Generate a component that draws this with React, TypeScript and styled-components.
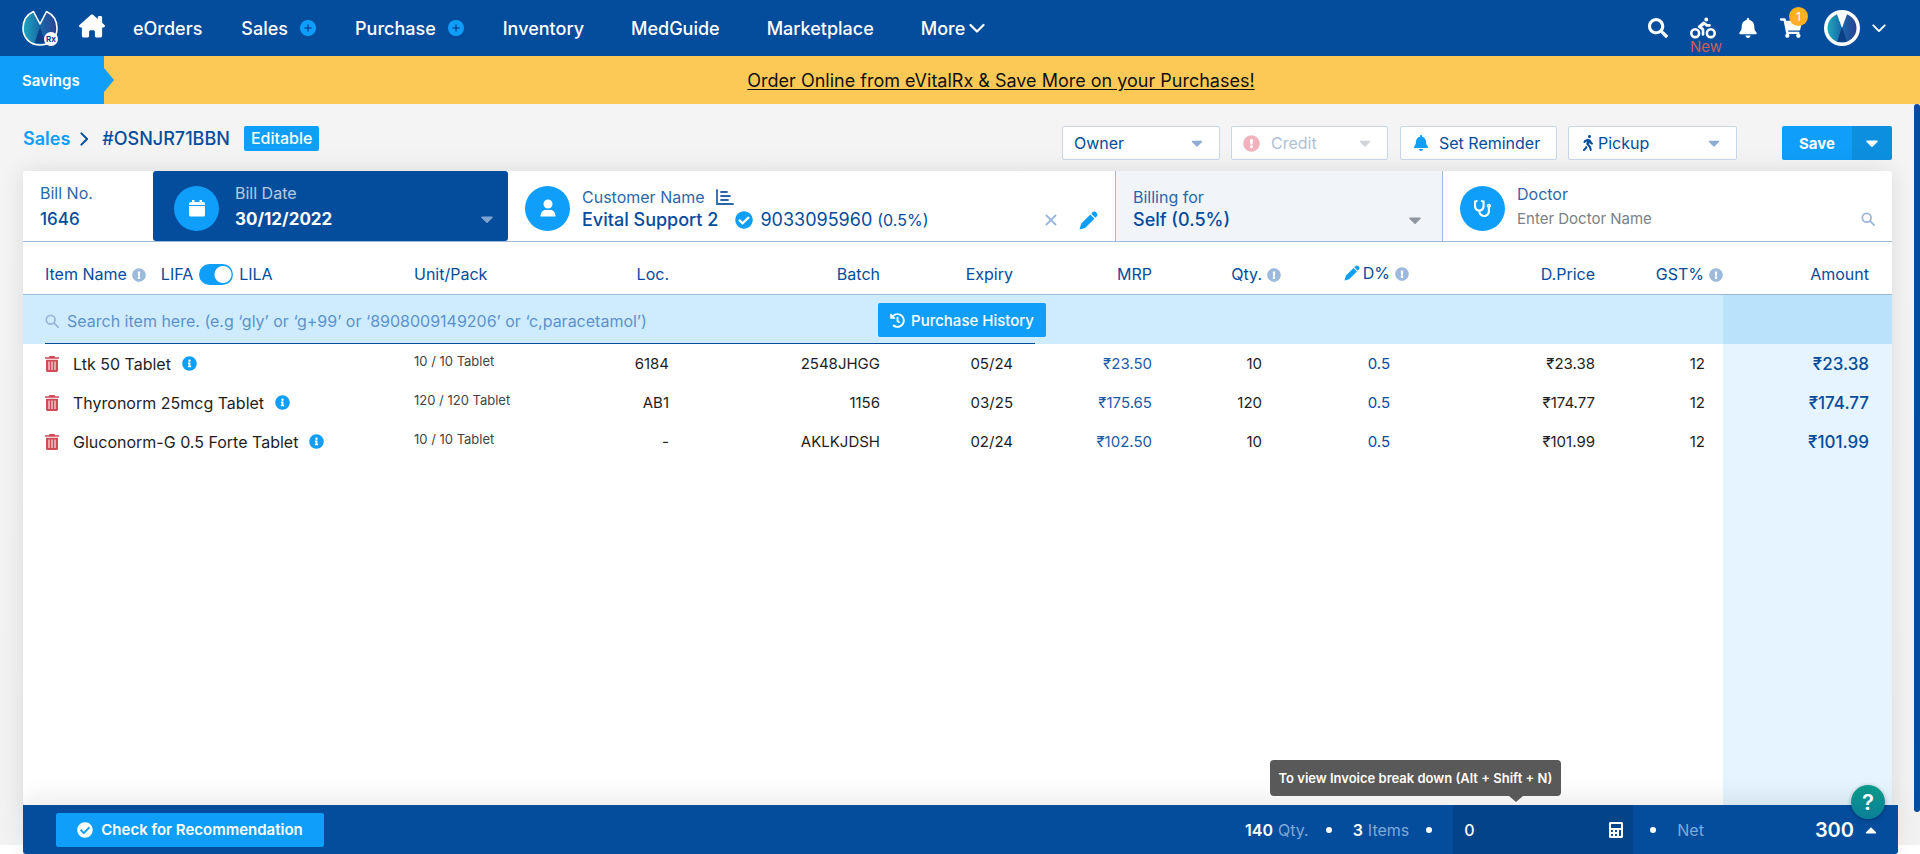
import React from "react";
import styled, { createGlobalStyle, css } from "styled-components";
import {
  FaSearch, FaBell, FaShoppingCart, FaWalking, FaCheckCircle,
  FaExclamationCircle, FaInfoCircle, FaHistory, FaStethoscope, FaCaretDown, FaCaretUp,
  FaCalculator, FaBiking,
} from "react-icons/fa";
import { FaHouseChimney } from "react-icons/fa6";

const NAVY = "#044c9c";
const SKY = "#0f9ef9";
const RULE = "#9db9dc";

const Global = createGlobalStyle`
  *, *::before, *::after { box-sizing: border-box; }
  body { margin: 0; background: #fff; font-family: Inter, "Noto Sans", sans-serif; font-size: 14px; color: ${NAVY}; }
  button, input, select { font: inherit; color: inherit; }
  button { border: 0; padding: 0; background: none; cursor: pointer; }
  a { color: inherit; text-decoration: none; }
  svg { display: block; flex: none; }
`;

const Page = styled.div`
  min-height: 100vh;
  display: flex;
  flex-direction: column;
`;

const Nav = styled.header`
  height: 56px;
  background: ${NAVY};
  color: #fff;
  display: flex;
  align-items: center;
  padding: 0 34px 0 22px;
`;
const Home = styled.a`margin: 0 28px 4px 21px;`;
const Links = styled.nav`
  display: flex;
  align-items: center;
  gap: 39px;
  font-size: 18px;
  font-weight: 500;
`;
const NavLink = styled.a<{ $wide?: boolean }>`
  display: flex;
  align-items: center;
  gap: ${(p) => (p.$wide ? 12 : 4)}px;
`;
const NavPlain = styled(NavLink)`padding-right: 8px;`;
const Tools = styled.div`
  margin-left: auto;
  display: flex;
  align-items: center;
  gap: 22px;
`;
const Tool = styled.button`
  position: relative;
  display: flex;
  align-items: center;
  gap: 12px;
`;
const NewTag = styled.span`
  position: absolute;
  top: 24px;
  left: 0;
  font-size: 15px;
  line-height: 15px;
  color: #cf5d5d;
`;
const CartCount = styled.span`
  position: absolute;
  right: -6px;
  top: -10px;
  width: 19px;
  height: 19px;
  border-radius: 50%;
  background: #fdb022;
  font-size: 12px;
  line-height: 19px;
  text-align: center;
`;

const Banner = styled.div`
  height: 48px;
  display: flex;
  background: #fdc956;
`;
const Savings = styled.div`
  position: relative;
  width: 104px;
  display: flex;
  align-items: center;
  padding-left: 22px;
  background: ${SKY};
  color: #fff;
  font-size: 15px;
  font-weight: 600;
  &::after {
    content: "";
    position: absolute;
    left: 100%;
    top: 12px;
    border: 12px solid transparent;
    border-left: 10px solid ${SKY};
    border-right: 0;
  }
`;
const Offer = styled.a`
  margin: auto;
  padding-right: 22px;
  color: #111;
  font-size: 18px;
  text-decoration: underline;
  text-underline-offset: 2px;
`;

const Body = styled.main`
  position: relative;
  flex: 1;
  display: flex;
  flex-direction: column;
  padding: 22px 22px 0 23px;
  background: linear-gradient(#f4f4f4 0, #f2f2f2 100%) no-repeat 0 0 / 100% calc(100% - 9px);
`;
const ScrollThumb = styled.div`
  position: absolute;
  right: 0;
  top: 0;
  width: 6px;
  bottom: 42px;
  border-radius: 4px;
  background: ${NAVY};
`;

const TitleRow = styled.div`
  display: flex;
  align-items: flex-start;
  padding-right: 6px;
  margin-bottom: 11px;
`;
const Crumbs = styled.div`
  display: flex;
  align-items: center;
  height: 25px;
  font-size: 18px;
  font-weight: 500;
  margin-right: auto;
  a { color: ${SKY}; font-weight: 600; }
  svg { margin: 0 11px 0 7px; }
`;
const Badge = styled.span`
  margin-left: 14px;
  padding: 0 7px;
  border-radius: 2px;
  background: ${SKY};
  color: #fff;
  font-size: 16px;
  line-height: 25px;
`;
const boxed = css`
  height: 34px;
  border: 1px solid #c9d7ea;
  border-radius: 2px;
  background: #fff;
`;
const Picker = styled.div<{ $width: number; $gap?: number; $off?: boolean }>`
  ${boxed}
  width: ${(p) => p.$width}px;
  margin-left: 11px;
  display: flex;
  align-items: center;
  gap: ${(p) => p.$gap ?? 8}px;
  padding: 0 13px 0 11px;
  color: ${(p) => (p.$off ? "#aebfd6" : NAVY)};
  & > svg:last-child { color: ${(p) => (p.$off ? "#cfd3da" : "#8fadd3")}; }
  select {
    appearance: none;
    border: 0;
    padding: 0;
    background: none;
    flex: 1;
    min-width: 0;
    opacity: 1;
    color: inherit;
    font-size: 16px;
  }
`;
const Reminder = styled.button`
  ${boxed}
  width: 157px;
  margin-left: 12px;
  display: flex;
  align-items: center;
  gap: 10px;
  padding-left: 12px;
  font-size: 16px;
  svg { color: ${SKY}; }
`;
const SaveGroup = styled.div`
  display: flex;
  height: 34px;
  margin-left: 45px;
  border-radius: 2px;
  overflow: hidden;
  color: #fff;
`;
const SaveButton = styled.button`
  width: 70px;
  background: ${SKY};
  font-size: 15px;
  font-weight: 700;
`;
const SaveMore = styled.button`
  width: 40px;
  display: grid;
  place-items: center;
  background: #0d8fe0;
`;

const Card = styled.section`
  flex: 1;
  display: flex;
  flex-direction: column;
  margin-right: 6px;
  background: linear-gradient(#e5f4fe, #e5f4fe) no-repeat right 0 top 124px / 169px 100%, #fff;
  border-radius: 2px;
  box-shadow: 0 0 24px rgba(0, 0, 0, 0.1);
`;
const Details = styled.div`
  display: flex;
  height: 71px;
  border-bottom: 1px solid ${RULE};
`;
const Field = styled.div<{ $basis: number; $tone?: "navy" | "pale"; $line?: boolean }>`
  flex: ${(p) => p.$basis} 1 ${(p) => p.$basis}px;
  min-width: 0;
  display: flex;
  align-items: center;
  gap: 12px;
  padding: 0 17px;
  border-left: ${(p) => (p.$line ? `1px solid ${RULE}` : 0)};
  ${(p) => p.$tone === "navy" && css`background: ${NAVY}; color: #fff; border-radius: 3px; padding: 0 11px 0 21px; gap: 16px;`}
  ${(p) => p.$tone === "pale" && css`background: #f1f5fa;`}
`;
const Round = styled.span`
  width: 45px;
  height: 45px;
  flex: none;
  border-radius: 50%;
  background: ${SKY};
  color: #fff;
  display: grid;
  place-items: center;
  margin-top: 4px;
`;
const Stack = styled.div<{ $low?: boolean }>`
  flex: 1;
  min-width: 0;
  display: flex;
  flex-direction: column;
  gap: ${(p) => (p.$low ? 0 : 3)}px;
  padding-top: ${(p) => (p.$low ? 6 : 0)}px;
`;
const Label = styled.label<{ $soft?: boolean }>`
  display: flex;
  align-items: center;
  gap: 11px;
  font-size: 16px;
  line-height: 22px;
  opacity: ${(p) => (p.$soft ? 0.7 : 0.85)};
`;
const Value = styled.div`
  display: flex;
  align-items: center;
  font-size: 18px;
  line-height: 24px;
  font-weight: 500;
`;
const Phone = styled.span`
  display: flex;
  align-items: center;
  gap: 7px;
  margin-left: 17px;
  font-weight: 400;
  svg { color: ${SKY}; }
  small { font-size: 16px; margin-left: -2px; }
`;
const IconPair = styled.div`
  display: flex;
  align-items: center;
  gap: 22px;
  margin-left: auto;
`;
const BareInput = styled.input`
  border: 0;
  padding: 0;
  background: none;
  width: 100%;
  min-width: 0;
  outline: 0;
  font-size: 15px;
  font-weight: 400;
  line-height: 22px;
  &::placeholder { color: #7b7f86; opacity: 1; }
`;
const BillInput = styled(BareInput)<{ $bold?: boolean }>`
  font-size: 17px;
  line-height: 24px;
  font-weight: ${(p) => (p.$bold ? 700 : 500)};
`;
const BillSelect = styled.select`
  appearance: none;
  border: 0;
  padding: 0;
  background: none;
  flex: 1;
  font-size: 18px;
  line-height: 24px;
  font-weight: 500;
`;

const Grid = styled.table`
  width: 100%;
  table-layout: fixed;
  border-collapse: separate;
  border-spacing: 0;
  font-size: 15px;
`;
const Head = styled.th<{ $left?: boolean; $pad?: number }>`
  height: 53px;
  padding: 12px ${(p) => p.$pad ?? 12}px 0 0;
  border-bottom: 1px solid ${RULE};
  background: #fff;
  font-size: 16px;
  font-weight: 400;
  text-align: ${(p) => (p.$left ? "left" : "right")};
  white-space: nowrap;
`;
const HeadInner = styled.span<{ $start?: number }>`
  display: inline-flex;
  align-items: center;
  gap: 5px;
  padding-left: ${(p) => p.$start ?? 0}px;
`;
const Dim = styled.span`color: ${RULE}; padding-top: 2px;`;
const Pen = styled.span`color: ${SKY}; margin-right: -2px;`;
const Mode = styled.label`
  display: flex;
  align-items: center;
  gap: 6px;
  margin-left: 10px;
  input {
    appearance: none;
    margin: 0;
    width: 34px;
    height: 21px;
    border-radius: 11px;
    background: radial-gradient(circle at 24px 50%, #fff 8px, transparent 9px), ${SKY};
  }
`;
const SearchCell = styled.td<{ $deep?: boolean }>`
  height: 49px;
  padding: 0;
  background: ${(p) => (p.$deep ? "#b9e2fb" : "#cfebfe")};
`;
const SearchLine = styled.div`
  display: flex;
  align-items: center;
  gap: 8px;
  height: 49px;
  max-width: 990px;
  margin-left: 22px;
  padding-top: 4px;
  border-bottom: 1px solid ${NAVY};
  color: #8db0d8;
`;
const SearchInput = styled(BareInput)`
  font-size: 16px;
  &::placeholder { color: #5b93cc; }
`;
const HistoryButton = styled.button`
  flex: none;
  display: flex;
  align-items: center;
  justify-content: center;
  gap: 6px;
  width: 168px;
  height: 34px;
  margin: 0 -11px 2px 0;
  border-radius: 2px;
  background: ${SKY};
  color: #fff;
  font-size: 15px;
  font-weight: 500;
`;
const Cell = styled.td<{ $tone?: string; $pad?: number }>`
  height: 39px;
  padding: 0 ${(p) => p.$pad ?? 12}px 0 0;
  text-align: right;
  color: ${(p) => p.$tone ?? "#1e1e1e"};
`;
const NameCell = styled(Cell)`
  text-align: left;
  font-size: 16px;
  & > div { display: flex; align-items: center; padding-left: 22px; }
  span { margin: 0 11px 0 14px; }
  & > div > svg { color: ${SKY}; }
  button { color: #cf4b58; }
`;
const UnitCell = styled(Cell)`
  text-align: left;
  padding: 0 0 6px 12px;
  font-size: 13px;
  color: #444;
`;
const AmountCell = styled(Cell)`
  font-size: 17px;
  font-weight: 500;
  color: ${NAVY};
`;

const Footer = styled.footer`
  position: relative;
  height: 49px;
  display: flex;
  align-items: center;
  padding: 0 18px 0 33px;
  background: ${NAVY};
  color: #fff;
  border-radius: 0 0 3px 3px;
  font-size: 16px;
  box-shadow: 0 -8px 24px rgba(0, 0, 0, 0.08);
`;
const Recommend = styled.button`
  display: flex;
  align-items: center;
  justify-content: center;
  gap: 8px;
  width: 268px;
  height: 34px;
  border-radius: 2px;
  background: ${SKY};
  font-size: 15px;
  font-weight: 600;
  margin-right: auto;
`;
const Total = styled.span`
  color: #7fa9d8;
  margin-right: 17px;
  b { color: #fff; font-weight: 600; margin-right: 5px; }
`;
const Dot = styled.i`
  width: 6px;
  height: 6px;
  border-radius: 50%;
  background: #fff;
  margin-right: 21px;
`;
const Adjust = styled.div`
  position: relative;
  width: 180px;
  height: 49px;
  margin-right: 17px;
  padding: 0 9px 0 11px;
  display: flex;
  align-items: center;
  background: #034389;
  input { font-weight: 500; font-size: 16px; }
`;
const Tip = styled.div`
  position: absolute;
  right: 72px;
  bottom: 58px;
  height: 36px;
  padding: 0 9px;
  border-radius: 4px;
  background: #595959;
  font-size: 13px;
  line-height: 36px;
  font-weight: 600;
  white-space: nowrap;
  &::after {
    content: "";
    position: absolute;
    top: 100%;
    right: 38px;
    border: 7px solid transparent;
    border-top: 6px solid #595959;
    border-bottom: 0;
  }
`;
const Net = styled.button`
  display: flex;
  align-items: center;
  gap: 8px;
  margin-left: 94px;
  font-size: 20px;
  font-weight: 600;
`;
const Help = styled.button`
  position: absolute;
  right: 13px;
  top: -20px;
  width: 34px;
  height: 34px;
  border-radius: 50%;
  background: linear-gradient(#0a9a8a, #0b7f98);
  box-shadow: 0 1px 4px rgba(0, 0, 0, 0.3);
  font-size: 22px;
  font-weight: 600;
`;

const Logo = ({ id, size, ring }: { id: string; size: number; ring?: boolean }) => (
  <svg width={size} height={size} viewBox="0 0 36 36" aria-hidden="true">
    <defs>
      <linearGradient id={id} x1="0" x2="1">
        <stop offset="0" stopColor="#1fa8bd" />
        <stop offset="0.5" stopColor="#1868a8" />
        <stop offset="1" stopColor="#2c3f93" />
      </linearGradient>
    </defs>
    {ring ? (
      <>
        <circle cx="18" cy="18" r="18" fill="#fff" />
        <circle cx="18" cy="18" r="14.500" fill={`url(#${id})`} />
        <path d="M12.500 3h11L18 18z" fill="#fff" />
        <path d="M18 17l5 15h-10z" fill="#0b3f85" />
      </>
    ) : (
      <>
        <path
          d="M11.500 1.500C5 4.500 1 10.500 1 18.500 1 28 8.500 35 18 35s17-7 17-16.500C35 10.500 31 4.500 24.500 1.500L18 14z"
          fill={`url(#${id})`} stroke="#fff" strokeWidth="1.600" strokeLinejoin="round"
        />
        <path d="M18 17l5.500 16h-11z" fill="#0b3f85" />
        <circle cx="29" cy="29" r="7" fill="#fff" />
        <text x="24" y="32" fontSize="8" fontWeight="700" fill="#0b3f85">Rx</text>
      </>
    )}
  </svg>
);
const AddDot = () => (
  <svg width="16" height="16" viewBox="0 0 16 16">
    <circle cx="8" cy="8" r="8" fill={SKY} />
    <path d="M8 4.500v7M4.500 8h7" stroke={NAVY} strokeWidth="1.500" />
  </svg>
);
const Chevron = ({ size = 14, dir = "down" }: { size?: number; dir?: "down" | "right" }) => (
  <svg width={size} height={size} viewBox="0 0 16 16" fill="none" stroke="currentColor" strokeWidth="2.200" strokeLinecap="round" strokeLinejoin="round">
    <path d={dir === "down" ? "M1.500 5L8 11.500 14.500 5" : "M5 1.500L11.500 8 5 14.500"} />
  </svg>
);
const Calendar = () => (
  <svg width="16" height="18" viewBox="0 0 16 18" fill="currentColor">
    <path d="M3 1h2.500v2h5V1H13v2h1a2 2 0 0 1 2 2v1H0V5a2 2 0 0 1 2-2h1zM0 7h16v9a1.500 1.500 0 0 1-1.500 1.500h-13A1.500 1.500 0 0 1 0 16z" />
  </svg>
);
const Person = () => (
  <svg width="16" height="18" viewBox="0 0 16 18" fill="currentColor">
    <circle cx="8" cy="5" r="4.500" />
    <path d="M.5 17.500c0-4 2-6.500 5-6.500h5c3 0 5 2.500 5 6.500z" />
  </svg>
);
const Report = () => (
  <svg width="18" height="16" viewBox="0 0 18 16" fill="none" stroke="currentColor" strokeWidth="1.800" strokeLinecap="round">
    <path d="M1 1v14h16M5 3h6M5 7h9M5 11h7" />
  </svg>
);
const Pencil = ({ size }: { size: number }) => (
  <svg width={size} height={size} viewBox="0 0 18 18" fill={SKY}>
    <path d="M12.800 1.300a2.500 2.500 0 0 1 3.400 0l.5.500a2.500 2.500 0 0 1 0 3.400l-1.200 1.200-3.900-3.900zM10.700 3.400l3.900 3.900-8.800 8.700L.5 17.500 2 12.100z" />
  </svg>
);
const Magnifier = ({ size }: { size: number }) => (
  <svg width={size} height={size} viewBox="0 0 16 16" fill="none" stroke="#9cb5d8" strokeWidth="2" strokeLinecap="round">
    <circle cx="6.500" cy="6.500" r="5" /><path d="M10.500 10.500l4.500 4.500" />
  </svg>
);
const Trash = () => (
  <svg width="14" height="16" viewBox="0 0 14 16" fill="currentColor">
    <path d="M4.500 0h5l.700 1.200H14v1.600H0V1.200h3.800z" />
    <path fillRule="evenodd" d="M1 3.800h12v10.700c0 .800-.700 1.500-1.500 1.500h-9C1.700 16 1 15.300 1 14.500zM3.500 5.500v8.500h1V5.500zm3 0v8.500h1V5.500zm3 0v8.500h1V5.500z" />
  </svg>
);

const rows = [
  { name: "Ltk 50 Tablet", unit: "10 / 10 Tablet", loc: "6184", batch: "2548JHGG", exp: "05/24", mrp: "₹23.50", qty: "10", price: "₹23.38", amount: "₹23.38" },
  { name: "Thyronorm 25mcg Tablet", unit: "120 / 120 Tablet", loc: "AB1", batch: "1156", exp: "03/25", mrp: "₹175.65", qty: "120", price: "₹174.77", amount: "₹174.77" },
  { name: "Gluconorm-G 0.5 Forte Tablet", unit: "10 / 10 Tablet", loc: "-", batch: "AKLKJDSH", exp: "02/24", mrp: "₹102.50", qty: "10", price: "₹101.99", amount: "₹101.99" },
];
const Col = styled.col<{ $w?: number }>`width: ${(p) => (p.$w ? `${p.$w}px` : "auto")};`;
const columns = [undefined, 160, 119, 211, 133, 139, 117, 128, 198, 116, 169];
const Hint = () => <Dim><FaExclamationCircle size={14} /></Dim>;

export default function App() {
  return (
    <Page>
      <Global />
      <Nav>
        <a href="#" aria-label="eVitalRx"><Logo id="brand" size={36} /></a>
        <Home href="#" aria-label="Home"><FaHouseChimney size={26} /></Home>
        <Links>
          <NavLink href="#">eOrders</NavLink>
          <NavLink href="#" $wide>Sales <AddDot /></NavLink>
          <NavLink href="#" $wide>Purchase <AddDot /></NavLink>
          <NavPlain href="#">Inventory</NavPlain>
          <NavPlain href="#">MedGuide</NavPlain>
          <NavPlain href="#">Marketplace</NavPlain>
          <NavLink href="#">More <Chevron size={16} /></NavLink>
        </Links>
        <Tools>
          <Tool aria-label="Search"><FaSearch size={20} /></Tool>
          <Tool><FaBiking size={26} /><NewTag>New</NewTag></Tool>
          <Tool aria-label="Notifications"><FaBell size={20} /></Tool>
          <Tool aria-label="Cart"><FaShoppingCart size={22} /><CartCount>1</CartCount></Tool>
          <Tool aria-label="Account"><Logo id="account" size={36} ring /><Chevron /></Tool>
        </Tools>
      </Nav>
      <Banner>
        <Savings>Savings</Savings>
        <Offer href="#">Order Online from eVitalRx &amp; Save More on your Purchases!</Offer>
      </Banner>
      <Body>
        <TitleRow>
          <Crumbs>
            <a href="#">Sales</a><Chevron dir="right" />#OSNJR71BBN<Badge>Editable</Badge>
          </Crumbs>
          <Picker $width={158}>
            <select aria-label="Owner"><option>Owner</option></select><FaCaretDown size={18} />
          </Picker>
          <Picker $width={157} $gap={11} $off>
            <FaExclamationCircle size={17} color="#f0b3bd" />
            <select aria-label="Payment" disabled><option>Credit</option></select><FaCaretDown size={18} />
          </Picker>
          <Reminder><FaBell size={16} />Set Reminder</Reminder>
          <Picker $width={169} $gap={2}>
            <FaWalking size={16} />
            <select aria-label="Delivery"><option>Pickup</option></select><FaCaretDown size={18} />
          </Picker>
          <SaveGroup>
            <SaveButton>Save</SaveButton>
            <SaveMore aria-label="More save options"><FaCaretDown size={20} /></SaveMore>
          </SaveGroup>
        </TitleRow>
        <Card>
          <Details>
            <Field $basis={130}>
              <Stack><Label htmlFor="bill">Bill No.</Label><BillInput id="bill" defaultValue="1646" /></Stack>
            </Field>
            <Field $basis={355} $tone="navy">
              <Round><Calendar /></Round>
              <Stack><Label $soft htmlFor="date">Bill Date</Label>
                <Value><BillInput $bold id="date" defaultValue="30/12/2022" /><FaCaretDown size={20} color="#7fa5d2" /></Value></Stack>
            </Field>
            <Field $basis={607}>
              <Round><Person /></Round>
              <Stack $low>
                <Label as="span">Customer Name <Report /></Label>
                <Value>Evital Support 2
                  <Phone><FaCheckCircle size={18} />9033095960 <small>(0.5%)</small></Phone>
                  <IconPair>
                    <button aria-label="Clear customer"><svg width="12" height="12" viewBox="0 0 12 12" stroke="#9cb5d8" strokeWidth="1.800"><path d="M1 1l10 10M11 1L1 11" /></svg></button>
                    <button aria-label="Edit customer"><Pencil size={19} /></button>
                  </IconPair>
                </Value>
              </Stack>
            </Field>
            <Field $basis={327} $tone="pale" $line>
              <Stack $low><Label htmlFor="for">Billing for</Label>
                <Value><BillSelect id="for"><option>Self (0.5%)</option></BillSelect><FaCaretDown size={20} color="#8f96a0" /></Value></Stack>
            </Field>
            <Field $basis={450} $line>
              <Round><FaStethoscope size={17} /></Round>
              <Stack><Label htmlFor="doctor">Doctor</Label>
                <Value><BareInput id="doctor" placeholder="Enter Doctor Name" /><Magnifier size={14} /></Value></Stack>
            </Field>
          </Details>
          <Grid>
            <colgroup>{columns.map((w, i) => <Col key={i} $w={w} />)}</colgroup>
            <thead>
              <tr>
                <Head $left><HeadInner $start={22}>Item Name <Hint /><Mode>LIFA <input type="checkbox" role="switch" defaultChecked />LILA</Mode></HeadInner></Head>
                <Head $left><HeadInner $start={12}>Unit/Pack</HeadInner></Head>
                <Head>Loc.</Head>
                <Head>Batch</Head>
                <Head>Expiry</Head>
                <Head>MRP</Head>
                <Head $pad={0}><HeadInner>Qty. <Hint /></HeadInner></Head>
                <Head $pad={0}><HeadInner><Pen><Pencil size={16} /></Pen>D% <Hint /></HeadInner></Head>
                <Head>D.Price</Head>
                <Head $pad={0}><HeadInner>GST% <Hint /></HeadInner></Head>
                <Head $pad={23}>Amount</Head>
              </tr>
            </thead>
            <tbody>
              <tr>
                <SearchCell colSpan={10}>
                  <SearchLine>
                    <Magnifier size={14} />
                    <SearchInput aria-label="Search item" placeholder="Search item here. (e.g ‘gly’ or ‘g+99’ or ‘8908009149206’ or ‘c,paracetamol’)" />
                    <HistoryButton><FaHistory size={15} />Purchase History</HistoryButton>
                  </SearchLine>
                </SearchCell>
                <SearchCell $deep />
              </tr>
              {rows.map((r) => (
                <tr key={r.name}>
                  <NameCell><div><button aria-label={`Delete ${r.name}`}><Trash /></button><span>{r.name}</span><FaInfoCircle size={15} /></div></NameCell>
                  <UnitCell>{r.unit}</UnitCell>
                  <Cell>{r.loc}</Cell>
                  <Cell>{r.batch}</Cell>
                  <Cell>{r.exp}</Cell>
                  <Cell $tone="#1d5aa8">{r.mrp}</Cell>
                  <Cell $pad={19}>{r.qty}</Cell>
                  <Cell $pad={19} $tone={NAVY}>0.5</Cell>
                  <Cell>{r.price}</Cell>
                  <Cell $pad={18}>12</Cell>
                  <AmountCell $pad={23}>{r.amount}</AmountCell>
                </tr>
              ))}
            </tbody>
          </Grid>
        </Card>
        <Footer>
          <Recommend><FaCheckCircle size={16} />Check for Recommendation</Recommend>
          <Total><b>140</b>Qty.</Total><Dot />
          <Total><b>3</b>Items</Total><Dot />
          <Adjust>
            <BareInput aria-label="Adjustment" defaultValue="0" /><FaCalculator size={16} />
            <Tip role="tooltip">To view Invoice break down (Alt + Shift + N)</Tip>
          </Adjust>
          <Dot />
          <Total>Net</Total>
          <Net>300 <FaCaretUp size={18} /></Net>
          <Help aria-label="Help">?</Help>
        </Footer>
        <ScrollThumb />
      </Body>
    </Page>
  );
}
